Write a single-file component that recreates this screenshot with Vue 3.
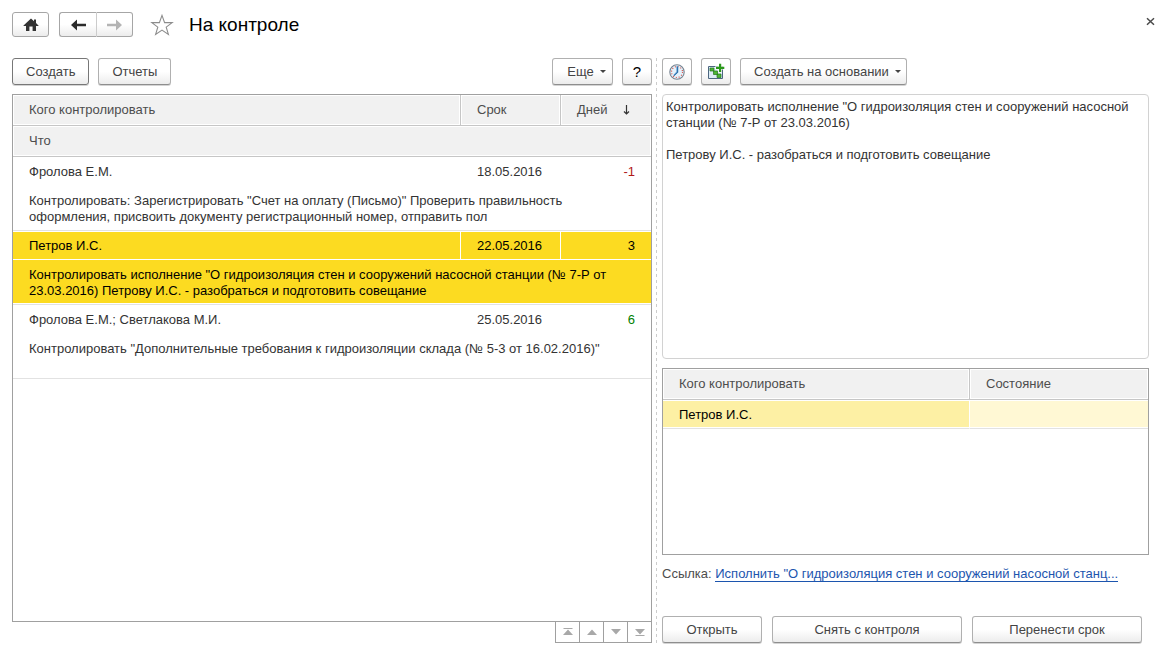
<script setup>
import { ref } from 'vue'

const tasks = [
  {
    who: 'Фролова Е.М.',
    date: '18.05.2016',
    days: '-1',
    tone: 'late',
    what: 'Контролировать: Зарегистрировать "Счет на оплату (Письмо)" Проверить правильность оформления, присвоить документу регистрационный номер, отправить пол',
  },
  {
    who: 'Петров И.С.',
    date: '22.05.2016',
    days: '3',
    tone: 'soon',
    what: 'Контролировать исполнение "О гидроизоляция стен и сооружений насосной станции (№ 7-Р от 23.03.2016) Петрову И.С. - разобраться и подготовить совещание',
  },
  {
    who: 'Фролова Е.М.; Светлакова М.И.',
    date: '25.05.2016',
    days: '6',
    tone: 'ok',
    what: 'Контролировать "Дополнительные требования к гидроизоляции склада (№ 5-3 от 16.02.2016)"',
  },
]
const selected = ref(1)
const details = ref(
  'Контролировать исполнение "О гидроизоляция стен и сооружений насосной станции (№ 7-Р от 23.03.2016)\n\nПетрову И.С. - разобраться и подготовить совещание'
)
</script>

<template>
  <div class="page">
    <header class="titlebar">
      <button class="btn nav" aria-label="Домой">
        <svg width="16" height="14" viewBox="0 0 16 14"><path d="M8 0.5L11 3.2V1.5h2v3.6L15.5 7.5v.6H13V13H9.6V8.6H6.4V13H3V8.1H.5v-.6z" fill="#333" /></svg>
      </button>
      <div class="history">
        <button class="btn nav" aria-label="Назад">
          <svg width="15" height="12" viewBox="0 0 15 12"><path d="M0 6L6 0.5V4.7H15V7.3H6V11.5z" fill="#2b2b2b" /></svg>
        </button>
        <button class="btn nav" aria-label="Вперед">
          <svg width="15" height="12" viewBox="0 0 15 12"><path d="M15 6L9 0.5V4.7H0V7.3H9V11.5z" fill="#b4b4b4" /></svg>
        </button>
      </div>
      <button class="plain star" aria-label="В избранное">
        <svg width="24" height="22" viewBox="0 0 24 22"><path d="M12 1.4L14.6 8.6H22.2L16.2 13.1L18.4 20.4L12 16.1L5.6 20.4L7.8 13.1L1.8 8.6H9.4z" fill="#fff" stroke="#8c8c8c" stroke-width="1.1" /></svg>
      </button>
      <h1>На контроле</h1>
      <button class="plain close" aria-label="Закрыть">
        <svg width="9" height="9" viewBox="0 0 9 9"><path d="M1 1.2L8 7.8M8 1.2L1 7.8" stroke="#4a4a4a" stroke-width="1.5" /></svg>
      </button>
    </header>

    <main class="columns">
      <section class="left">
        <div class="toolbar">
          <button class="btn primary">Создать</button>
          <button class="btn">Отчеты</button>
          <span class="spacer"></span>
          <button class="btn menu">Еще<i class="caret"></i></button>
          <button class="btn help">?</button>
        </div>

        <div class="frame">
          <table class="tasks">
            <colgroup><col /><col class="c-date" /><col class="c-days" /></colgroup>
            <thead>
              <tr>
                <th scope="col">Кого контролировать</th>
                <th scope="col">Срок</th>
                <th scope="col">
                  <span class="sort">Дней
                    <svg width="7" height="10" viewBox="0 0 7 10"><path d="M3.5 0V9M1 6.5L3.5 9L6 6.5" fill="none" stroke="#333" stroke-width="1.2" /></svg>
                  </span>
                </th>
              </tr>
              <tr><th scope="col" colspan="3">Что</th></tr>
            </thead>
            <tbody v-for="(t, i) in tasks" :key="i" :class="{ active: i === selected }" @click="selected = i">
              <tr class="main">
                <td>{{ t.who }}</td>
                <td>{{ t.date }}</td>
                <td class="days" :class="t.tone">{{ t.days }}</td>
              </tr>
              <tr class="what"><td colspan="3">{{ t.what }}</td></tr>
            </tbody>
          </table>
        </div>
        <div class="pager">
          <button aria-label="В начало"><svg width="12" height="8" viewBox="0 0 12 8"><path d="M1.5 0H10.5V1H1.5zM6 1.5L11 7H1z" fill="#a8a8a8" /></svg></button>
          <button aria-label="Вверх"><svg width="12" height="8" viewBox="0 0 12 8"><path d="M6 1.5L11 7H1z" fill="#a8a8a8" /></svg></button>
          <button aria-label="Вниз"><svg width="12" height="8" viewBox="0 0 12 8"><path d="M6 6.5L11 1H1z" fill="#a8a8a8" /></svg></button>
          <button aria-label="В конец"><svg width="12" height="8" viewBox="0 0 12 8"><path d="M6 6.5L11 1H1zM1.5 7H10.5V8H1.5z" fill="#a8a8a8" /></svg></button>
        </div>
      </section>

      <div class="splitter"></div>

      <section class="right">
        <div class="toolbar">
          <button class="btn icon" aria-label="История">
            <svg width="18" height="18" viewBox="0 0 18 18">
              <circle cx="9" cy="9" r="7.2" fill="#e4f2fb" stroke="#75828f" stroke-width="1.1" />
              <circle cx="9" cy="9" r="5.5" fill="none" stroke="#d9534a" stroke-width="1.2" stroke-dasharray="1 1.88" />
              <path d="M8.4 3.2L10.2 3.4V9.4L6.2 13L5.2 12.2L8.4 8.8z" fill="#5b9bd0" />
              <path d="M9.6 3.6V9.4L6 12.6" fill="none" stroke="#2d6da8" />
            </svg>
          </button>
          <button class="btn icon" aria-label="Новый процесс">
            <svg width="18" height="18" viewBox="0 0 18 18">
              <path d="M1.5 3.5H15.5V15.5H1.5z" fill="#dcebf6" stroke="#4c6680" />
              <path d="M3 5h4v3H3zM6.500 8h4v3.500h-4zM10 11h4v3.500h-4z" fill="#4cb534" stroke="#23751b" stroke-width=".7" />
              <path d="M11.500 .2h3.200v3h3.200v3.200h-3.200v3h-3.200v-3h-3.200v-3.200h3.200z" fill="#fff" />
              <path d="M13.100 .8V9M9 4.900H17.300" stroke="#2b981a" stroke-width="2.200" />
            </svg>
          </button>
          <button class="btn menu">Создать на основании<i class="caret"></i></button>
        </div>

        <textarea v-model="details" class="details" aria-label="Описание"></textarea>

        <div class="frame people">
          <table>
            <colgroup><col /><col class="c-state" /></colgroup>
            <thead>
              <tr><th scope="col">Кого контролировать</th><th scope="col">Состояние</th></tr>
            </thead>
            <tbody>
              <tr class="person"><td>Петров И.С.</td><td></td></tr>
            </tbody>
          </table>
        </div>

        <p class="ref">Ссылка: <a href="#">Исполнить "О гидроизоляция стен и сооружений насосной станц...</a></p>

        <div class="actions">
          <button class="btn open">Открыть</button>
          <button class="btn release">Снять с контроля</button>
          <button class="btn move">Перенести срок</button>
        </div>
      </section>
    </main>
  </div>
</template>

<style>
body { margin: 0; background: #fff; }
</style>

<style scoped>
* { box-sizing: border-box; }
.page {
  min-height: 100vh;
  padding: 12px 19px 12px 12px;
  display: flex;
  flex-direction: column;
  font: 13px/16px "Liberation Sans", Arial, sans-serif;
  color: #333;
}
button, textarea { font: inherit; color: inherit; }
.titlebar { display: flex; align-items: center; height: 25px; margin-bottom: 21px; }
h1 { margin: 0 auto 0 15px; font-size: 19px; line-height: 25px; font-weight: 400; color: #000; }
.btn {
  height: 27px;
  padding: 0 13px;
  border: 1px solid #b0b0b0;
  border-bottom-color: #8e8e8e;
  border-radius: 3px;
  background: linear-gradient(#fff 50%, #ececec);
  box-shadow: 0 1px 0 #d4d4d4;
  color: #444;
  white-space: nowrap;
  display: flex;
  align-items: center;
  justify-content: center;
}
.btn.primary { border-color: #777; }
.btn.nav { width: 37px; height: 25px; padding: 0; border-color: #a6a6a6; box-shadow: none; }
.history { display: flex; margin-left: 10px; }
.history .btn:first-child { border-radius: 3px 0 0 3px; border-right-color: #ccc; width: 38px; }
.history .btn:last-child { border-radius: 0 3px 3px 0; border-left: 0; width: 36px; }
.plain { border: 0; padding: 0; background: none; display: flex; }
.star { margin-left: 17px; }
.close { margin-right: -6px; margin-bottom: 7px; }
.columns { flex: 1; display: grid; grid-template-columns: 640fr 10px 487fr; }
.left, .right { display: flex; flex-direction: column; min-width: 0; }
.splitter { margin-left: 4px; width: 1px; background: repeating-linear-gradient(#ccc 0 3px, #fff 3px 6px); }
.toolbar { display: flex; gap: 9px; height: 27px; margin-bottom: 9px; flex: none; }
.spacer { flex: 1; }
.btn.menu { padding: 0 5px 0 13px; gap: 6px; min-width: 61px; }
.caret { border: 3px solid transparent; border-top-color: #444; border-bottom: 0; }
.btn.help { width: 30px; padding: 0; color: #000; font-size: 15px; }
.btn.icon { width: 30px; padding: 0; }
.frame { flex: 1; border: 1px solid #a0a0a0; min-height: 0; }
table { width: 100%; border-collapse: separate; border-spacing: 0; table-layout: fixed; }
.c-date { width: 100px; }
.c-days { width: 90px; }
.c-state { width: 178px; }
th {
  height: 31px;
  padding: 0 16px;
  text-align: left;
  font-weight: 400;
  color: #4d4d4d;
  background: #f1f1f1;
  border-right: 1px solid #c6c6c6;
  border-bottom: 1px solid #c6c6c6;
  box-shadow: inset 0 0 0 1px #fff;
}
th:last-child { border-right: 0; }
.sort { display: flex; align-items: center; gap: 16px; }
td { padding: 0 16px; }
.main td { height: 29px; border-top: 1px solid #fff; border-bottom: 1px solid #fff; border-right: 1px solid #fff; }
.main td:nth-child(2) { padding-right: 0; }
.main td:last-child { border-right: 0; }
.days { text-align: right; }
.late { color: #b01818; }
.ok { color: #008000; }
.what td { height: 45px; vertical-align: top; padding: 7px 40px 4px 16px; border-bottom: 1px solid #e2e2e2; box-shadow: inset 0 -1px 0 #fff; }
.active td { background: #fcdb21; color: #000; }
.pager { align-self: flex-end; display: flex; border: 1px solid #a0a0a0; border-top: 0; }
.pager button { width: 24px; height: 20px; padding: 0; border: 0; border-right: 1px solid #a0a0a0; background: #fff; display: flex; align-items: center; justify-content: center; }
.pager button:last-child { width: 23px; border-right: 0; }
.details { flex: 255 1 0; display: block; width: 100%; padding: 4px 3px; border: 1px solid #d2d2d2; border-radius: 4px; resize: none; outline: 0; }
.people { flex: 185 1 0; margin-top: 9px; }
.person td { height: 29px; background: #fdf0a4; color: #000; border-top: 1px solid #fff; border-bottom: 1px solid #e2e2e2; border-right: 1px solid #fff; box-shadow: inset 0 -1px 0 #fff; }
.person td:last-child { background: #fff8d4; border-right: 0; }
.ref { margin: 11px 0 34px; white-space: nowrap; overflow: hidden; text-overflow: ellipsis; color: #4d4d4d; }
.ref a { color: #1c55ae; text-decoration: none; border-bottom: 1px solid #1c55ae; }
.actions { display: flex; gap: 10px; }
.open { width: 100px; }
.release { width: 190px; }
.move { width: 170px; }
</style>
